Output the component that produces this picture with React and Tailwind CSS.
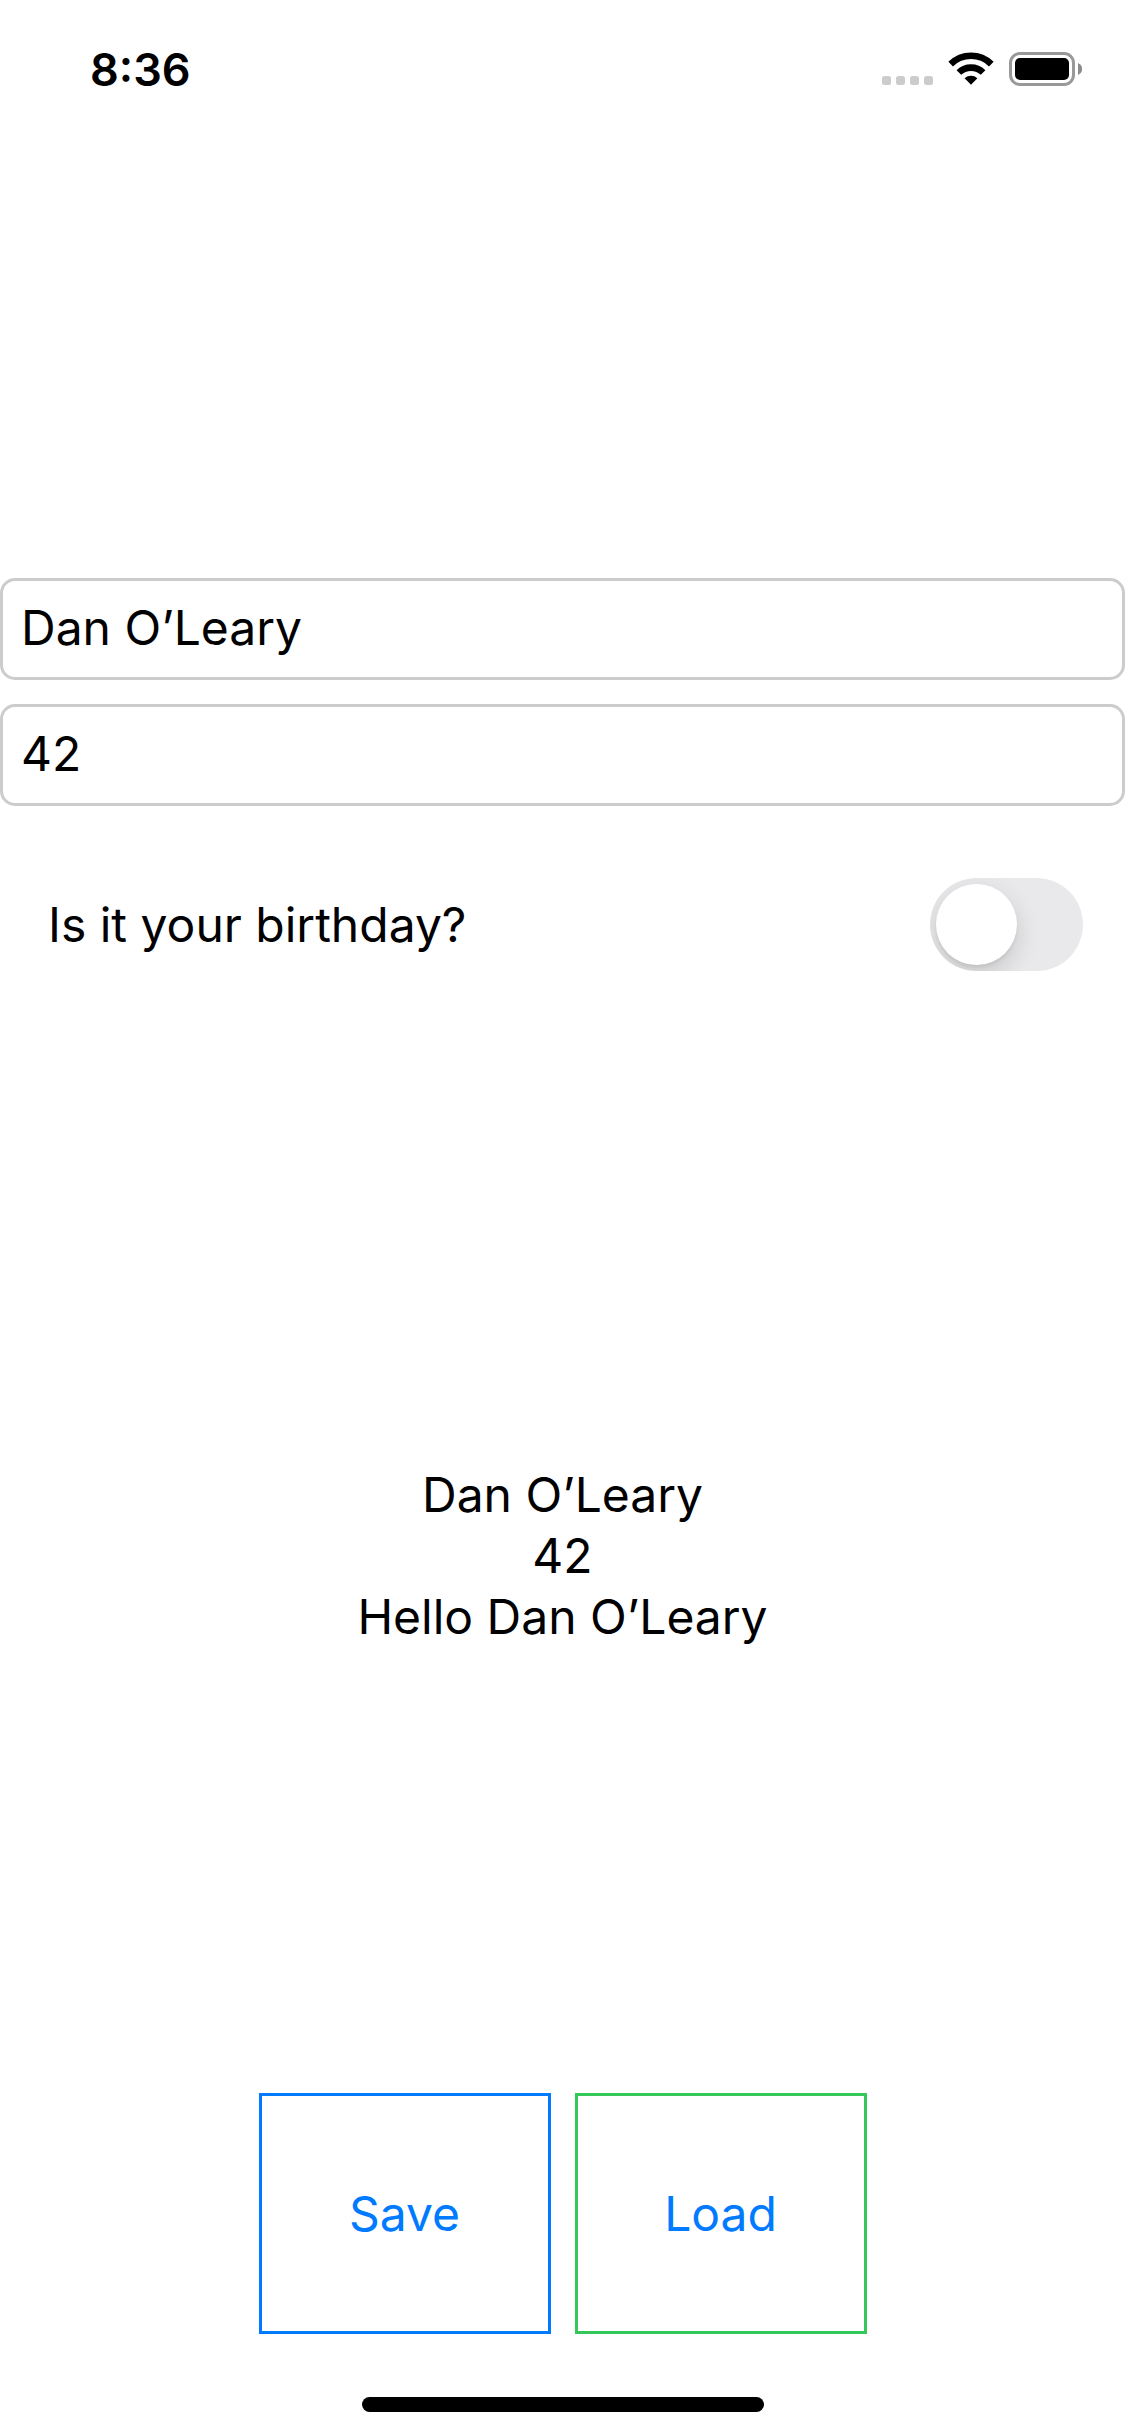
import { useState } from "react";

function StatusBar({ time }) {
  return (
    <header className="flex h-[132px] items-start justify-between pl-[90px] pr-[43px]">
      <time className="pt-10 text-[45px] leading-[60px] font-semibold">{time}</time>
      <div className="flex items-end gap-[15px] pt-[52px]">
        <svg className="mb-px h-[9px] w-[51px]" viewBox="0 0 51 9" fill="#cccccc" aria-label="No signal">
          <rect x="0" width="9" height="9" rx="2.5" />
          <rect x="14" width="9" height="9" rx="2.5" />
          <rect x="28" width="9" height="9" rx="2.5" />
          <rect x="42" width="9" height="9" rx="2.5" />
        </svg>
        <svg className="mb-px h-[33px] w-[46px]" viewBox="0 0 46 33" aria-label="Wi-Fi">
          <g fill="none" stroke="#000" strokeWidth="6.6">
            <path d="M2.7 12.1A29 29 0 0 1 43.3 12.1" />
            <path d="M10.9 20.5A17.4 17.4 0 0 1 35.1 20.5" />
          </g>
          <path d="M16.6 26.3A9.5 9.5 0 0 1 29.4 26.3L23 32.8Z" />
        </svg>
        <svg className="h-[34px] w-[73px]" viewBox="0 0 73 34" aria-label="Battery full">
          <rect x="1.5" y="1.5" width="63" height="31" rx="9.5" fill="none" stroke="#999999" strokeWidth="3" />
          <rect x="6" y="6" width="54" height="22" rx="5" />
          <path d="M69 11A6.4 6.4 0 0 1 69 23Z" fill="#8c8c8c" />
        </svg>
      </div>
    </header>
  );
}

function Field({ label, value, onChange, inputMode }) {
  return (
    <input
      aria-label={label}
      inputMode={inputMode}
      value={value}
      onChange={(e) => onChange(e.target.value)}
      className="h-[102px] w-full rounded-[15px] border-3 border-[#cccccc] bg-white px-[18px] pb-0.5 outline-none"
    />
  );
}

function Toggle({ label, checked, onChange }) {
  return (
    <label className="flex items-center justify-between py-12 pr-[42px] pl-12">
      <span>{label}</span>
      <span className="flex h-[93px] w-[153px] overflow-hidden rounded-full bg-[#e9e9eb] p-[6px] has-checked:bg-[#34c759]">
        <input
          type="checkbox"
          role="switch"
          checked={checked}
          onChange={(e) => onChange(e.target.checked)}
          className="size-[81px] appearance-none rounded-full bg-white shadow-[0_9px_24px_rgba(0,0,0,0.15),0_3px_3px_rgba(0,0,0,0.06)] checked:ml-auto"
        />
      </span>
    </label>
  );
}

export default function App() {
  const [name, setName] = useState("Dan O’Leary");
  const [age, setAge] = useState("42");
  const [birthday, setBirthday] = useState(false);

  return (
    <div className="flex min-h-screen flex-col bg-white font-['Inter',sans-serif] text-[48px] leading-[61px] text-black">
      <StatusBar time="8:36" />
      <main className="flex flex-1 flex-col">
        <div className="flex-1" />
        <form className="flex flex-col gap-6">
          <Field label="Name" value={name} onChange={setName} />
          <Field label="Age" inputMode="numeric" value={age} onChange={setAge} />
          <Toggle label="Is it your birthday?" checked={birthday} onChange={setBirthday} />
        </form>
        <div className="flex-1" />
        <section className="text-center">
          <p>{name}</p>
          <p>{age}</p>
          <p>Hello {name}</p>
        </section>
        <div className="flex-1" />
        <div className="flex justify-center gap-6">
          <button type="button" className="h-[241px] w-[292px] border-3 border-[#007aff] text-[#007aff]">
            Save
          </button>
          <button type="button" className="h-[241px] w-[292px] border-3 border-[#34c759] text-[#007aff]">
            Load
          </button>
        </div>
      </main>
      <footer className="flex h-[102px] items-end justify-center pb-6">
        <div className="h-[15px] w-[402px] rounded-full bg-black" />
      </footer>
    </div>
  );
}
